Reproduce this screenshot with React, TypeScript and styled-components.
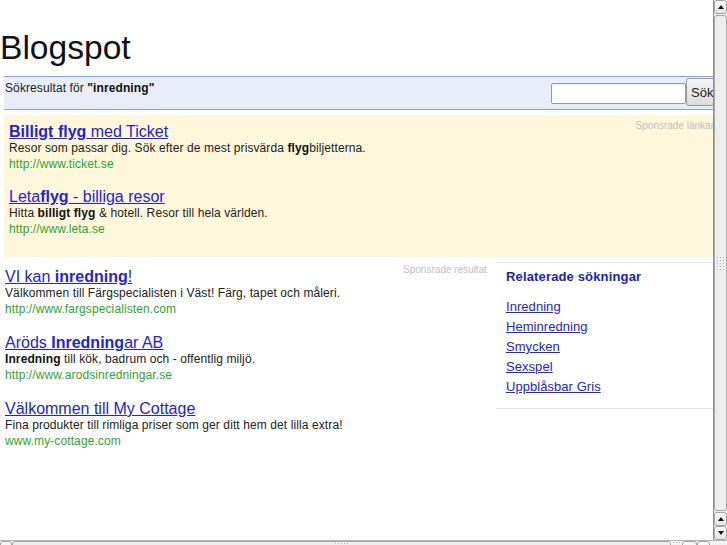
import React from "react";
import styled, { createGlobalStyle } from "styled-components";

const Global = createGlobalStyle`
  html, body { margin: 0; padding: 0; background: #fff; }
  body { font-family: "Liberation Sans", Arial, sans-serif; }
  * { box-sizing: border-box; }
`;

const Frame = styled.div`
  width: 727px;
  height: 545px;
  display: flex;
  flex-direction: column;
  overflow: hidden;
  background: #fff;
`;

const TopRow = styled.div`
  display: flex;
  height: 540px;
  flex-shrink: 0;
`;

const Viewport = styled.div`
  flex: 1;
  min-width: 0;
  overflow: hidden;
`;

const SiteTitle = styled.h1`
  margin: 0;
  padding: 29px 0 10px 0;
  font-weight: normal;
  font-size: 33.6px;
  line-height: 37px;
  color: #111;
`;

const Content = styled.div`
  margin-left: 4px;
  width: 715px;
`;

const SearchBar = styled.div`
  display: flex;
  justify-content: space-between;
  align-items: flex-start;
  height: 34px;
  border-top: 1px solid #86a3e3;
  border-bottom: 1px solid #86a3e3;
  background: #e8edf9;
  padding-left: 1px;
`;

const QueryText = styled.div`
  padding-top: 3px;
  font-size: 12px;
  line-height: 16px;
  letter-spacing: 0.1px;
  color: #222;
  b { color: #111; }
`;

const SearchForm = styled.form`
  display: flex;
  align-items: flex-start;
  margin: 0;
`;

const SearchInput = styled.input`
  margin-top: 6px;
  width: 135px;
  height: 21px;
  border: 1px solid #9a9a9a;
  border-radius: 2px;
  background: #fff;
  box-shadow: inset 0 1px 1px rgba(0, 0, 0, 0.08);
  padding: 0 3px;
`;

const SearchButton = styled.button`
  margin-top: 1px;
  width: 33px;
  height: 28px;
  padding: 0 0 0 4px;
  text-align: left;
  border: 1px solid #9c9c9c;
  border-radius: 3px;
  background: linear-gradient(#f6f6f6, #dcdcdc);
  font-family: "Liberation Sans", Arial, sans-serif;
  font-size: 13px;
  color: #222;
`;

const AdBox = styled.div`
  margin-top: 5px;
  background: #fff7dc;
  padding: 5px 5px 7px 5px;
`;

const SmallLabel = styled.div<{ $top?: number }>`
  float: right;
  font-size: 10px;
  line-height: 12px;
  color: #c2c2c2;
  margin-top: ${(p) => p.$top ?? 0}px;
`;

const Result = styled.div<{ $gap: number }>`
  margin-bottom: ${(p) => p.$gap}px;
`;

const TitleLine = styled.div`
  padding-top: 3px;
  font-size: 16px;
  line-height: 17px;
`;

const ResultTitle = styled.a`
  color: #2323d4;
  text-decoration: underline;
  b { font-weight: bold; }
`;

const Desc = styled.div`
  font-size: 12px;
  line-height: 16px;
  letter-spacing: 0.1px;
  color: #222;
  b { color: #111; }
`;

const Url = styled.div`
  font-size: 12px;
  line-height: 16px;
  letter-spacing: 0.1px;
  color: #30a430;
`;

const Lower = styled.div`
  display: flex;
  align-items: flex-start;
`;

const ResultsColumn = styled.div`
  width: 486px;
  padding: 8px 3px 0 1px;
`;

const RelatedPanel = styled.div`
  width: 223px;
  margin: 5px 0 0 6px;
  border-top: 1px solid #dfe3ec;
  border-bottom: 1px solid #dfe3ec;
  padding: 6px 10px 11px 10px;
`;

const RelatedHeading = styled.div`
  font-size: 13px;
  line-height: 16px;
  font-weight: bold;
  letter-spacing: 0.15px;
  color: #1c1cc0;
  margin-bottom: 12px;
`;

const RelatedLink = styled.a`
  display: block;
  width: fit-content;
  font-size: 13px;
  line-height: 20px;
  letter-spacing: 0.05px;
  color: #2323d4;
  text-decoration: underline;
`;

/* ---------- scrollbars ---------- */

const VScroll = styled.div`
  width: 14px;
  flex-shrink: 0;
  display: flex;
  flex-direction: column;
  background: #ececec;
  border-left: 1px solid #8e8e8e;
`;

const ArrowButton = styled.div<{ $dir: "up" | "down" | "left" | "right"; $w?: number }>`
  flex-shrink: 0;
  width: ${(p) => p.$w ?? 13}px;
  height: 14px;
  border: 1px solid #a4a4a4;
  border-radius: 3px;
  background: linear-gradient(#fbfbfb, #e4e4e4);
  display: flex;
  align-items: center;
  justify-content: center;
  &::after {
    content: "";
    width: 0;
    height: 0;
    border-left: 3px solid transparent;
    border-right: 3px solid transparent;
    ${(p) =>
      p.$dir === "up"
        ? "border-bottom: 4px solid #111;"
        : p.$dir === "down"
        ? "border-top: 4px solid #111;"
        : "border-top: 3px solid transparent; border-bottom: 3px solid transparent; border-left: 0; border-right: 0;"}
  }
`;

const VThumb = styled.div`
  flex: 1;
  margin: 1px 0;
  border: 1px solid #a8a8a8;
  border-radius: 3px;
  background: #eeeeee;
  display: flex;
  align-items: center;
  justify-content: center;
`;

const Grip = styled.span<{ $w: number; $h: number }>`
  width: ${(p) => p.$w}px;
  height: ${(p) => p.$h}px;
  background-image: radial-gradient(circle, #b4b4b4 0.8px, transparent 1px);
  background-size: 3px 3px;
`;

const HScroll = styled.div`
  height: 5px;
  flex-shrink: 0;
  overflow: hidden;
  display: flex;
  align-items: flex-start;
  border-top: 1px solid #b5b5b5;
  background: #f2f2f2;
  padding-right: 17px;
`;

const HThumb = styled.div`
  flex: 1;
  height: 14px;
  border: 1px solid #a8a8a8;
  border-radius: 3px;
  background: #eeeeee;
  display: flex;
  justify-content: center;
`;

const Corner = styled.div`
  width: 11px;
  height: 14px;
  flex-shrink: 0;
  display: flex;
  justify-content: center;
`;

const ads = [
  {
    title: (
      <>
        <b>Billigt flyg</b> med Ticket
      </>
    ),
    desc: (
      <>
        Resor som passar dig. Sök efter de mest prisvärda <b>flyg</b>biljetterna.
      </>
    ),
    url: "http://www.ticket.se",
  },
  {
    title: (
      <>
        Leta<b>flyg</b> - billiga resor
      </>
    ),
    desc: (
      <>
        Hitta <b>billigt flyg</b> &amp; hotell. Resor till hela världen.
      </>
    ),
    url: "http://www.leta.se",
  },
];

const results = [
  {
    title: (
      <>
        VI kan <b>inredning</b>!
      </>
    ),
    desc: <>Välkommen till Färgspecialisten i Väst! Färg, tapet och måleri.</>,
    url: "http://www.fargspecialisten.com",
  },
  {
    title: (
      <>
        Aröds <b>Inredning</b>ar AB
      </>
    ),
    desc: (
      <>
        <b>Inredning</b> till kök, badrum och - offentlig miljö.
      </>
    ),
    url: "http://www.arodsinredningar.se",
  },
  {
    title: <>Välkommen till My Cottage</>,
    desc: <>Fina produkter till rimliga priser som ger ditt hem det lilla extra!</>,
    url: "www.my-cottage.com",
  },
];

const related = ["Inredning", "Heminredning", "Smycken", "Sexspel", "Uppblåsbar Gris"];

export default function App() {
  return (
    <>
      <Global />
      <Frame>
        <TopRow>
          <Viewport>
            <SiteTitle>Blogspot</SiteTitle>
            <Content>
              <SearchBar>
                <QueryText>
                  Sökresultat för <b>"inredning"</b>
                </QueryText>
                <SearchForm onSubmit={(e) => e.preventDefault()}>
                  <SearchInput type="text" />
                  <SearchButton type="submit">Sök</SearchButton>
                </SearchForm>
              </SearchBar>

              <AdBox>
                <SmallLabel>Sponsrade länkar</SmallLabel>
                {ads.map((ad, i) => (
                  <Result key={i} $gap={13}>
                    <TitleLine>
                      <ResultTitle href="#">{ad.title}</ResultTitle>
                    </TitleLine>
                    <Desc>{ad.desc}</Desc>
                    <Url>{ad.url}</Url>
                  </Result>
                ))}
              </AdBox>

              <Lower>
                <ResultsColumn>
                  <SmallLabel $top={-1}>Sponsrade resultat</SmallLabel>
                  {results.map((r, i) => (
                    <Result key={i} $gap={14}>
                      <TitleLine>
                        <ResultTitle href="#">{r.title}</ResultTitle>
                      </TitleLine>
                      <Desc>{r.desc}</Desc>
                      <Url>{r.url}</Url>
                    </Result>
                  ))}
                </ResultsColumn>
                <RelatedPanel>
                  <RelatedHeading>Relaterade sökningar</RelatedHeading>
                  {related.map((r) => (
                    <RelatedLink key={r} href="#">
                      {r}
                    </RelatedLink>
                  ))}
                </RelatedPanel>
              </Lower>
            </Content>
          </Viewport>
          <VScroll>
            <ArrowButton $dir="up" />
            <VThumb>
              <Grip $w={9} $h={15} />
            </VThumb>
            <ArrowButton $dir="up" />
            <ArrowButton $dir="down" />
          </VScroll>
        </TopRow>
        <HScroll>
          <ArrowButton $dir="left" $w={12} />
          <HThumb>
            <Grip $w={15} $h={9} />
          </HThumb>
          <Corner>
            <Grip $w={9} $h={9} />
          </Corner>
          <ArrowButton $dir="left" $w={15} />
          <ArrowButton $dir="right" $w={13} />
        </HScroll>
      </Frame>
    </>
  );
}
